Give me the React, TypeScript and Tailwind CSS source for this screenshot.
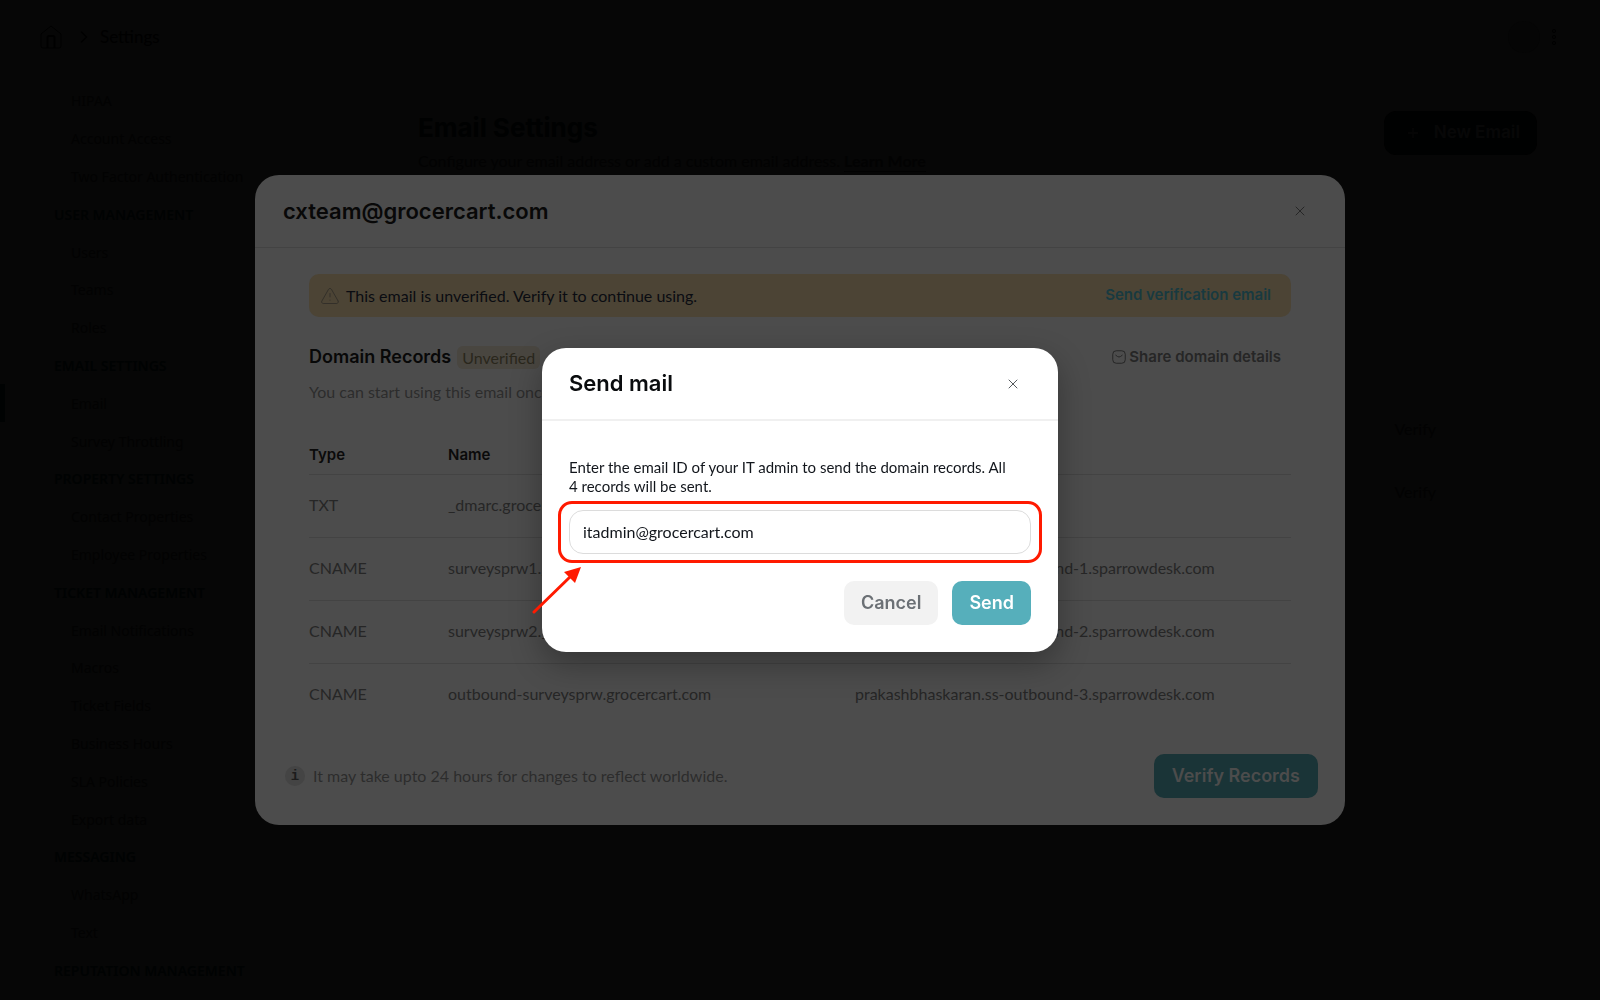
import { useState } from 'react';
import { ChevronRight, Plus, TriangleAlert, X } from 'lucide-react';

interface NavItem {
  label: string;
  heading?: boolean;
  active?: boolean;
}

interface DomainRecord {
  type: string;
  name: string;
  value: string;
}

const navItems: NavItem[] = [
  { label: 'HIPAA' },
  { label: 'Account Access' },
  { label: 'Two Factor Authentication' },
  { label: 'USER MANAGEMENT', heading: true },
  { label: 'Users' },
  { label: 'Teams' },
  { label: 'Roles' },
  { label: 'EMAIL SETTINGS', heading: true },
  { label: 'Email', active: true },
  { label: 'Survey Throttling' },
  { label: 'PROPERTY SETTINGS', heading: true },
  { label: 'Contact Properties' },
  { label: 'Employee Properties' },
  { label: 'TICKET MANAGEMENT', heading: true },
  { label: 'Email Notifications' },
  { label: 'Macros' },
  { label: 'Ticket Fields' },
  { label: 'Business Hours' },
  { label: 'SLA Policies' },
  { label: 'Export data' },
  { label: 'MESSAGING', heading: true },
  { label: 'WhatsApp' },
  { label: 'Text' },
  { label: 'REPUTATION MANAGEMENT', heading: true },
];

const records: DomainRecord[] = [
  { type: 'TXT', name: '_dmarc.grocercart.com', value: 'v=DMARC1; p=none' },
  {
    type: 'CNAME',
    name: 'surveysprw1._domainkey.grocercart.com',
    value: 'prakashbhaskaran.ss-outbound-1.sparrowdesk.com',
  },
  {
    type: 'CNAME',
    name: 'surveysprw2._domainkey.grocercart.com',
    value: 'prakashbhaskaran.ss-outbound-2.sparrowdesk.com',
  },
  {
    type: 'CNAME',
    name: 'outbound-surveysprw.grocercart.com',
    value: 'prakashbhaskaran.ss-outbound-3.sparrowdesk.com',
  },
];

function TopBar() {
  return (
    <header className="flex h-[74px] shrink-0 items-center justify-between pl-10 pr-11">
      <nav aria-label="Breadcrumb" className="flex items-center text-black">
        <a aria-label="Home" href="#home">
          <svg className="h-6 w-[22px]" fill="none" stroke="currentColor" viewBox="0 0 22 24">
            <path d="M1 9 L11 1 L21 9 V21 Q21 23 19 23 H3 Q1 23 1 21 Z" />
            <path d="M7.500 23 V12.500 Q7.500 11 9 11 H13 Q14.500 11 14.500 12.500 V23" strokeWidth="2" />
          </svg>
        </a>
        <ChevronRight className="ml-3 mr-[6px] h-5 w-5" strokeWidth={1.5} />
        <a className="text-[17px]" href="#settings">
          Settings
        </a>
      </nav>
      <div className="flex items-center gap-3">
        <span className="h-8 w-8 rounded-full bg-[#050505]" />
        <button aria-label="More options" type="button">
          <svg className="h-4 w-1" fill="none" stroke="#010101" viewBox="0 0 4 16">
            <circle cx="2" cy="2" r="1.500" />
            <circle cx="2" cy="8" r="1.500" />
            <circle cx="2" cy="14" r="1.500" />
          </svg>
        </button>
      </div>
    </header>
  );
}

function Sidebar() {
  return (
    <nav
      aria-label="Settings"
      className="flex w-[378px] shrink-0 flex-col pb-[11px] pt-2 font-['Noto_Sans',sans-serif] text-[14px]"
    >
      {navItems.map((item) =>
        item.heading ? (
          <h2 className="flex flex-1 items-center pl-[54px] font-semibold text-[#000202]" key={item.label}>
            {item.label}
          </h2>
        ) : (
          <a
            className={`flex flex-1 items-center border-l-[5px] pl-[66px] text-[#020202] ${
              item.active ? 'border-[#000202]' : 'border-transparent'
            }`}
            href="#settings"
            key={item.label}
          >
            {item.label}
          </a>
        )
      )}
    </nav>
  );
}

function EmailSettings() {
  return (
    <main className="min-w-0 flex-1 pl-10 pr-[63px] pt-[37px] text-[#020202]">
      <div className="flex items-start justify-between">
        <div>
          <h1 className="font-['Inter',sans-serif] text-[26px] font-bold leading-[34px] text-[#000101]">
            Email Settings
          </h1>
          <p className="mt-[7px] text-base leading-[18px]">
            Configure your email address or add a custom email address.{' '}
            <a className="font-bold underline underline-offset-4" href="#learn">
              Learn More
            </a>
          </p>
        </div>
        <button
          className="flex h-11 items-center gap-[13px] rounded-xl bg-[#000101] pl-[21px] pr-[17px] font-['Inter',sans-serif] text-[17px] font-bold text-[#070707]"
          type="button"
        >
          <Plus className="h-4 w-4" strokeWidth={2} />
          New Email
        </button>
      </div>
      <div className="flex flex-col items-end gap-[39px] pr-[101px] pt-[247px] text-base leading-6">
        <button type="button">Verify</button>
        <button type="button">Verify</button>
      </div>
    </main>
  );
}

function DomainDialog() {
  return (
    <section
      aria-labelledby="domain-title"
      className="w-full max-w-[1090px] rounded-3xl bg-[#4c4c4c] text-base text-[#262626]"
      role="dialog"
    >
      <header className="flex h-[73px] items-center justify-between border-b border-[#434343] pl-7 pr-[37px]">
        <h2 className="font-['Inter',sans-serif] text-[22px] font-semibold text-[#080808]" id="domain-title">
          cxteam@grocercart.com
        </h2>
        <button aria-label="Close" type="button">
          <X className="h-4 w-4" strokeWidth={1.5} />
        </button>
      </header>

      <div className="px-[54px] pt-[26px]">
        <div className="flex h-[43px] items-center rounded-[10px] bg-[#4c4435] pl-[11px] pr-5">
          <TriangleAlert className="h-5 w-5 text-[#2e2b26]" strokeWidth={1} />
          <p className="ml-[6px] flex-1 text-[#0a0c12]">This email is unverified. Verify it to continue using.</p>
          <button className="font-['Inter',sans-serif] text-[15px] font-semibold text-[#183a40]" type="button">
            Send verification email
          </button>
        </div>

        <div className="mt-7 flex h-6 items-center">
          <h3 className="font-['Inter',sans-serif] text-lg font-semibold text-[#080808]">Domain Records</h3>
          <span className="ml-[6px] rounded-md bg-[#494640] px-[5px] leading-[23px] text-[#2a271c]">Unverified</span>
          <button
            className="ml-auto mr-[10px] flex items-center gap-[3px] font-['Inter',sans-serif] text-[15px] font-semibold"
            type="button"
          >
            <svg className="h-[14px] w-[14px]" fill="none" stroke="currentColor" viewBox="0 0 14 14">
              <rect height="12.500" rx="3.500" width="12.500" x=".75" y=".75" />
              <path d="M3.500 5 L5.500 6.500 Q7 7.500 8.500 6.500 L10.500 5" />
            </svg>
            Share domain details
          </button>
        </div>
        <p className="mt-[11px] leading-6 text-[#2c2c2c]">You can start using this email once the domain is verified.</p>

        <table className="mt-8 w-full table-fixed text-left">
          <thead className="font-['Inter',sans-serif] text-[15px]">
            <tr className="h-[38px] border-b border-[#434343] text-[#0a0a0a]">
              <th className="w-[139px] font-semibold">Type</th>
              <th className="w-[407px] font-semibold">Name</th>
              <th className="font-semibold">Value</th>
            </tr>
          </thead>
          <tbody>
            {records.map((record) => (
              <tr className="h-[63px] border-b border-[#434343] last:border-0" key={record.value}>
                <td className="pb-[2px]">{record.type}</td>
                <td className="pb-[2px]">{record.name}</td>
                <td className="pb-[2px]">{record.value}</td>
              </tr>
            ))}
          </tbody>
        </table>
      </div>

      <footer className="flex items-center pb-[27px] pl-[30px] pr-[27px] pt-7">
        <span className="flex h-5 w-5 items-center justify-center rounded-full bg-[#444444] font-['Liberation_Mono',monospace] text-sm font-bold text-[#1c1c1c]">
          i
        </span>
        <p className="ml-2 flex-1 text-[#2c2c2c]">It may take upto 24 hours for changes to reflect worldwide.</p>
        <button
          className="h-11 rounded-[10px] bg-[#1a3437] px-[18px] font-['Inter',sans-serif] text-lg font-semibold text-[#4c4c4c]"
          type="button"
        >
          Verify Records
        </button>
      </footer>
    </section>
  );
}

function SendMailDialog() {
  const [email, setEmail] = useState('itadmin@grocercart.com');

  return (
    <form
      aria-labelledby="send-title"
      className="w-full max-w-[516px] rounded-3xl bg-white text-base text-[#12161c] shadow-[0_12px_32px_rgba(0,0,0,0.3)]"
      onSubmit={(e) => e.preventDefault()}
      role="dialog"
    >
      <header className="flex h-[73px] items-center justify-between border-b-2 border-[#f0f0f0] pl-[27px] pr-[37px]">
        <h2 className="font-['Inter',sans-serif] text-[22px] font-semibold text-[#0a0c0e]" id="send-title">
          Send mail
        </h2>
        <button aria-label="Close" className="text-[#55595d]" type="button">
          <X className="h-4 w-4" strokeWidth={1.5} />
        </button>
      </header>

      <div className="px-[27px] pb-[27px] pt-[37px]">
        <label className="block text-[15px] leading-[19px]" htmlFor="admin-email">
          Enter the email ID of your IT admin to send the domain records. All {records.length}&nbsp;records will be
          sent.
        </label>

        <div className="relative mt-[14px]">
          <input
            className="block h-11 w-full rounded-[14px] border border-[#dcdcdc] px-[13px] pb-[2px] outline-none"
            id="admin-email"
            onChange={(e) => setEmail(e.target.value)}
            type="email"
            value={email}
          />
          {/* callout around the field */}
          <div className="pointer-events-none absolute -inset-x-[11px] -inset-y-[9px] rounded-[14px] border-[3px] border-[#ff1a00]" />
          <svg
            className="pointer-events-none absolute -left-[37px] top-[56px] h-[48px] w-[52px]"
            fill="#ff1a00"
            viewBox="0 0 52 48"
          >
            <path d="M2 46 L39 10" stroke="#ff1a00" strokeLinecap="round" strokeWidth="3" />
            <path d="M49 1 L32 6 L43 17 Z" />
          </svg>
        </div>

        <div className="mt-[27px] flex justify-end gap-[14px] font-['Inter',sans-serif] text-lg font-semibold">
          <button className="h-11 rounded-[10px] bg-[#f2f2f2] px-[17px] text-[#6b7075]" type="button">
            Cancel
          </button>
          <button className="h-11 rounded-[10px] bg-[#56afbb] px-[17px] text-white" type="submit">
            Send
          </button>
        </div>
      </div>
    </form>
  );
}

export default function App() {
  return (
    <div className="flex h-screen flex-col overflow-hidden bg-[#060606] font-['Lato',sans-serif]">
      <TopBar />
      <div className="flex min-h-0 flex-1">
        <Sidebar />
        <EmailSettings />
      </div>
      <div className="fixed inset-0 flex items-center justify-center">
        <DomainDialog />
      </div>
      <div className="fixed inset-0 flex items-center justify-center">
        <SendMailDialog />
      </div>
    </div>
  );
}
